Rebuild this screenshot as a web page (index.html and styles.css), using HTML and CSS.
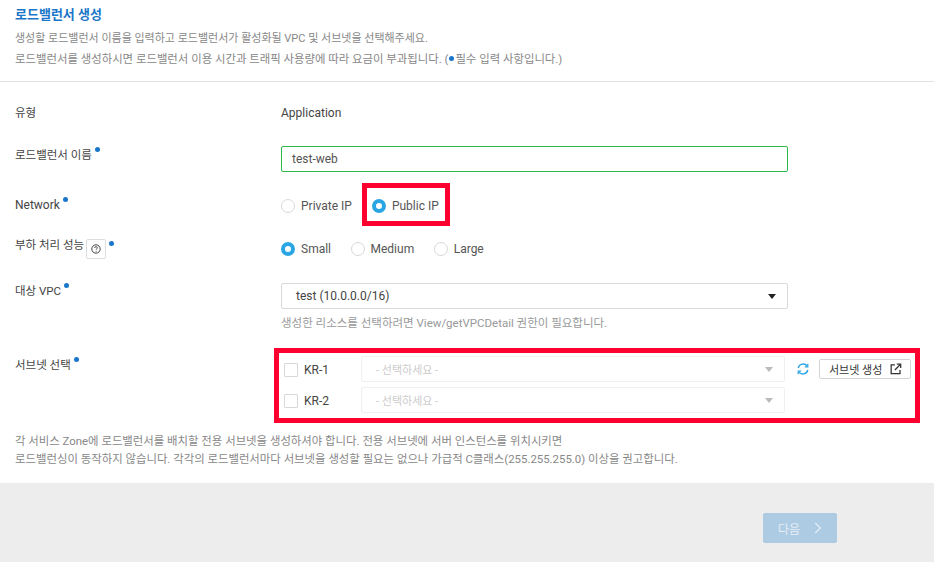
FILE: index.html
```html
<!DOCTYPE html>
<html lang="ko">
<head>
<meta charset="utf-8">
<title>로드밸런서 생성</title>
<link rel="stylesheet" href="styles.css">
</head>
<body>
<main class="page">
  <header class="intro">
    <h1 class="title">로드밸런서 생성</h1>
    <p class="desc">생성할 로드밸런서 이름을 입력하고 로드밸런서가 활성화될 VPC 및 서브넷을 선택해주세요.</p>
    <p class="desc desc-long">로드밸런서를 생성하시면 로드밸런서 이용 시간과 트래픽 사용량에 따라 요금이 부과됩니다. (<i class="dot dot-inline"></i>필수 입력 사항입니다.)</p>
  </header>

  <section class="form">
    <div class="row row-type">
      <div class="label">유형</div>
      <div class="value">Application</div>
    </div>
    <div class="row row-name">
      <div class="label">로드밸런서 이름<i class="dot"></i></div>
      <div class="value"><div class="input">test-web</div></div>
    </div>
    <div class="row row-net">
      <div class="label label-latin">Network<i class="dot"></i></div>
      <div class="value radios">
        <span class="radio"><i class="rb"></i>Private IP</span>
        <span class="radio"><i class="rb on"></i>Public IP</span>
      </div>
    </div>
    <div class="row row-perf">
      <div class="label">부하 처리 성능<span class="help"><svg width="10" height="10" viewBox="0 0 10 10"><circle cx="5" cy="5" r="4.2" fill="none" stroke="#444" stroke-width="1"/><path d="M3.6 4c0-.9.6-1.4 1.4-1.4s1.4.5 1.4 1.2c0 .9-1.3 1-1.3 2" fill="none" stroke="#444" stroke-width=".9"/><circle cx="5.1" cy="7.2" r=".55" fill="#444"/></svg></span><i class="dot"></i></div>
      <div class="value radios radios-wide">
        <span class="radio"><i class="rb on"></i>Small</span>
        <span class="radio"><i class="rb"></i>Medium</span>
        <span class="radio"><i class="rb"></i>Large</span>
      </div>
    </div>
    <div class="row row-vpc">
      <div class="label">대상 VPC<i class="dot"></i></div>
      <div class="value">
        <div class="select"><span>test (10.0.0.0/16)</span><i class="caret"></i></div>
        <p class="hint">생성한 리소스를 선택하려면 View/getVPCDetail 권한이 필요합니다.</p>
      </div>
    </div>
    <div class="row row-subnet">
      <div class="label">서브넷 선택<i class="dot"></i></div>
      <div class="value subnets">
        <div class="zone">
          <i class="check"></i><span class="zone-name">KR-1</span>
          <div class="select select-off"><span>- 선택하세요 -</span><i class="caret caret-off"></i></div>
          <svg class="refresh" width="14" height="14" viewBox="0 0 14 14" fill="none" stroke="#2ba6e4" stroke-width="1.4"><path d="M2.2 6a5 5 0 0 1 9-1.8"/><path d="M11.8 8a5 5 0 0 1-9 1.8"/><path d="M11.8 1.8v3h-3" stroke-width="1.2"/><path d="M2.2 12.2v-3h3" stroke-width="1.2"/></svg>
          <button class="mini" type="button">서브넷 생성<svg width="12" height="12" viewBox="0 0 12 12" fill="none" stroke="#333" stroke-width="1.3"><path d="M5 1.7H1.2v9.1h9.1V7"/><path d="M5 7l5.6-5.6"/><path d="M7 1h4v4"/></svg></button>
        </div>
        <div class="zone">
          <i class="check"></i><span class="zone-name">KR-2</span>
          <div class="select select-off"><span>- 선택하세요 -</span><i class="caret caret-off"></i></div>
        </div>
      </div>
    </div>
    <div class="notes">
      <p>각 서비스 Zone에 로드밸런서를 배치할 전용 서브넷을 생성하셔야 합니다. 전용 서브넷에 서버 인스턴스를 위치시키면</p>
      <p>로드밸런싱이 동작하지 않습니다. 각각의 로드밸런서마다 서브넷을 생성할 필요는 없으나 가급적 C클래스(255.255.255.0) 이상을 권고합니다.</p>
    </div>
  </section>

  <footer class="foot">
    <button class="next" type="button">다음<svg width="8" height="12" viewBox="0 0 8 12" fill="none" stroke="#e6eef6" stroke-width="1.2"><path d="M1.2 1l5.2 5-5.2 5"/></svg></button>
  </footer>

  <div class="mark mark-public"></div>
  <div class="mark mark-subnet"></div>
</main>
</body>
</html>
```
FILE: styles.css
```css
* { box-sizing: border-box; }
html, body { margin: 0; padding: 0; }
body {
  width: 934px;
  height: 562px;
  overflow: hidden;
  background: #fff;
  font-family: Roboto, "Noto Sans CJK KR", sans-serif;
  font-size: 12px;
  color: #333;
}
i { display: inline-block; font-style: normal; }
p { margin: 0; }
.page { position: relative; width: 934px; height: 562px; display: flex; flex-direction: column; }

.intro { height: 82px; padding: 6px 15px 0; border-bottom: 1px solid #e3e3e3; }
.title { margin: 0 0 4px; font-size: 13px; line-height: 18px; font-weight: 700; color: #1a76c9; }
.desc { font-size: 11px; line-height: 21px; color: #888; }
.desc-long { font-size: 11.4px; }

.dot { width: 5px; height: 5px; border-radius: 50%; background: #1a76c9; margin-left: 3px; position: relative; top: -6px; }
.dot-inline { margin: 0 1px 0 1px; top: -2px; }

.form { flex: 1; }
.row { display: flex; }
.label { width: 281px; padding-left: 15px; line-height: 18px; font-size: 11.5px; color: #444; flex: none; display: flex; align-items: flex-start; }
.label-latin { font-size: 12px; }
.label .dot { top: 1px; }
.value { flex: 1; font-size: 12px; color: #444; }

.row-type { padding-top: 22px; height: 64px; line-height: 18px; }
.row-name { height: 37px; }
.input { width: 507px; height: 26px; border: 1px solid #2eb84a; border-radius: 2px; padding: 0 10px; line-height: 24px; color: #555; }

.row-net { padding-top: 13px; height: 45px; }
.row-perf { height: 54px; padding-top: 8px; }
.row-perf .dot { top: 5px; }
.radios { display: flex; gap: 20px; padding-top: 1px; }
.radios-wide { gap: 19.5px; padding-top: 4px; }
.radio { display: inline-flex; align-items: center; gap: 6px; height: 18px; color: #555; }
.rb { width: 14px; height: 14px; border-radius: 50%; border: 1px solid #d8d8d8; background: #fff; }
.rb.on { border: 4px solid #2ba6e4; }
.help { display: inline-flex; flex: none; align-items: center; justify-content: center; width: 20px; height: 20px; border: 1px solid #ddd; border-radius: 2px; margin-left: 2px; margin-top: 3px; }

.select { width: 507px; height: 26px; border: 1px solid #d9d9d9; border-radius: 2px; padding: 0 14px; display: flex; align-items: center; justify-content: space-between; color: #444; }
.caret { width: 0; height: 0; border-left: 4px solid transparent; border-right: 4px solid transparent; border-top: 5px solid #222; margin-right: -3px; }
.hint { margin-top: 6px; font-size: 11.5px; line-height: 16px; color: #999; }

.row-vpc { height: 74px; }
.row-vpc .value { padding-top: 1px; }
.row-subnet { height: 73px; }
.subnets { padding-left: 3px; display: flex; flex-direction: column; gap: 5px; }
.zone { display: flex; align-items: center; height: 26px; }
.check { width: 14px; height: 14px; flex: none; margin-top: 2px; border: 1px solid #d8d8d8; border-radius: 1px; }
.zone-name { width: 63px; flex: none; margin-top: 2px; padding-left: 6px; font-size: 12px; color: #444; }
.select-off { width: 424px; flex: none; height: 26px; border-color: #f0f0f0; color: #ccc; padding: 0 14px; font-size: 11px; }
.caret-off { border-top-color: #bbb; }
.refresh { margin-left: 11px; flex: none; }
.mini { display: inline-flex; align-items: center; gap: 8px; flex: none; height: 20px; width: 92px; margin-left: 9px; padding: 0 8px 0 9px; background: #fff; border: 1px solid #d4d4d4; border-radius: 2px; font: 11px Roboto, "Noto Sans CJK KR", sans-serif; color: #333; white-space: nowrap; }
.notes { padding-left: 15px; font-size: 11.4px; line-height: 18px; color: #888; margin-top: 3px; }

.foot { height: 79px; flex: none; background: #ededed; display: flex; justify-content: flex-end; padding: 30px 97px 0 0; }
.next { width: 74px; height: 30px; border: 0; border-radius: 2px; background: #aecbe4; color: #e6eef6; font: 12px Roboto, "Noto Sans CJK KR", sans-serif; display: flex; align-items: center; justify-content: center; gap: 14px; padding: 0; }

.mark { position: absolute; border: 5px solid #fd0030; pointer-events: none; }
.mark-public { left: 362px; top: 183px; width: 88px; height: 43px; }
.mark-subnet { left: 274px; top: 348px; width: 646px; height: 75px; }
```
